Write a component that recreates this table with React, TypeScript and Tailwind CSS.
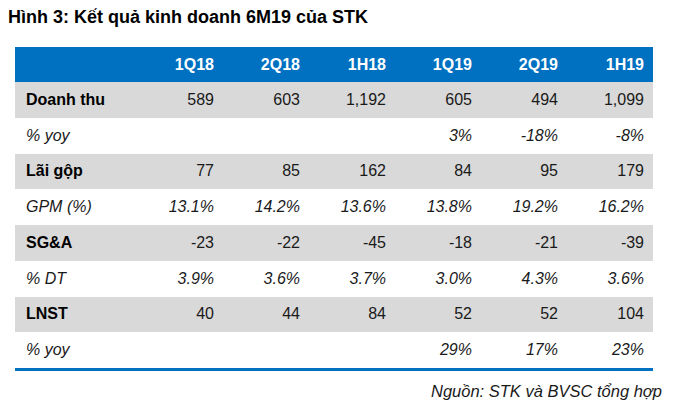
const cols = ["1Q18", "2Q18", "1H18", "1Q19", "2Q19", "1H19"];

const rows = [
  { label: "Doanh thu", values: ["589", "603", "1,192", "605", "494", "1,099"], main: true },
  { label: "% yoy", values: ["", "", "", "3%", "-18%", "-8%"], main: false },
  { label: "Lãi gộp", values: ["77", "85", "162", "84", "95", "179"], main: true },
  { label: "GPM (%)", values: ["13.1%", "14.2%", "13.6%", "13.8%", "19.2%", "16.2%"], main: false },
  { label: "SG&A", values: ["-23", "-22", "-45", "-18", "-21", "-39"], main: true },
  { label: "% DT", values: ["3.9%", "3.6%", "3.7%", "3.0%", "4.3%", "3.6%"], main: false },
  { label: "LNST", values: ["40", "44", "84", "52", "52", "104"], main: true },
  { label: "% yoy", values: ["", "", "", "29%", "17%", "23%"], main: false },
];

export default function App() {
  return (
    <div className="w-[676px] h-[411px] bg-white text-[#1a1a1a] font-['Liberation_Sans',Arial,sans-serif]">
      <h1 className="pl-2 pt-[6px] text-[18px] font-bold leading-[22px] text-black">
        Hình 3: Kết quả kinh doanh 6M19 của STK
      </h1>

      <div className="ml-[15px] mt-[19px] w-[638px]">
        <div className="flex h-[35px] items-center bg-[#0070c0] text-[16px] font-bold text-white">
          <div className="w-[122px]" />
          {cols.map((c) => (
            <div key={c} className="w-[86px] pr-[9px] text-right">{c}</div>
          ))}
        </div>

        {rows.map((r, i) => (
          <div
            key={i}
            className={`flex h-[35.75px] items-center text-[16px] ${r.main ? "bg-[#d9d9d9]" : "italic"}`}
          >
            <div className={`w-[122px] pl-[11px] ${r.main ? "font-bold text-black" : ""}`}>{r.label}</div>
            {r.values.map((v, j) => (
              <div key={j} className="w-[86px] pr-[9px] text-right">{v}</div>
            ))}
          </div>
        ))}

        <div className="h-[3px] bg-[#0070c0]" />
      </div>

      <p className="mt-[10px] pr-[14px] text-right text-[16.5px] italic leading-5">
        Nguồn: STK và BVSC tổng hợp
      </p>
    </div>
  );
}
